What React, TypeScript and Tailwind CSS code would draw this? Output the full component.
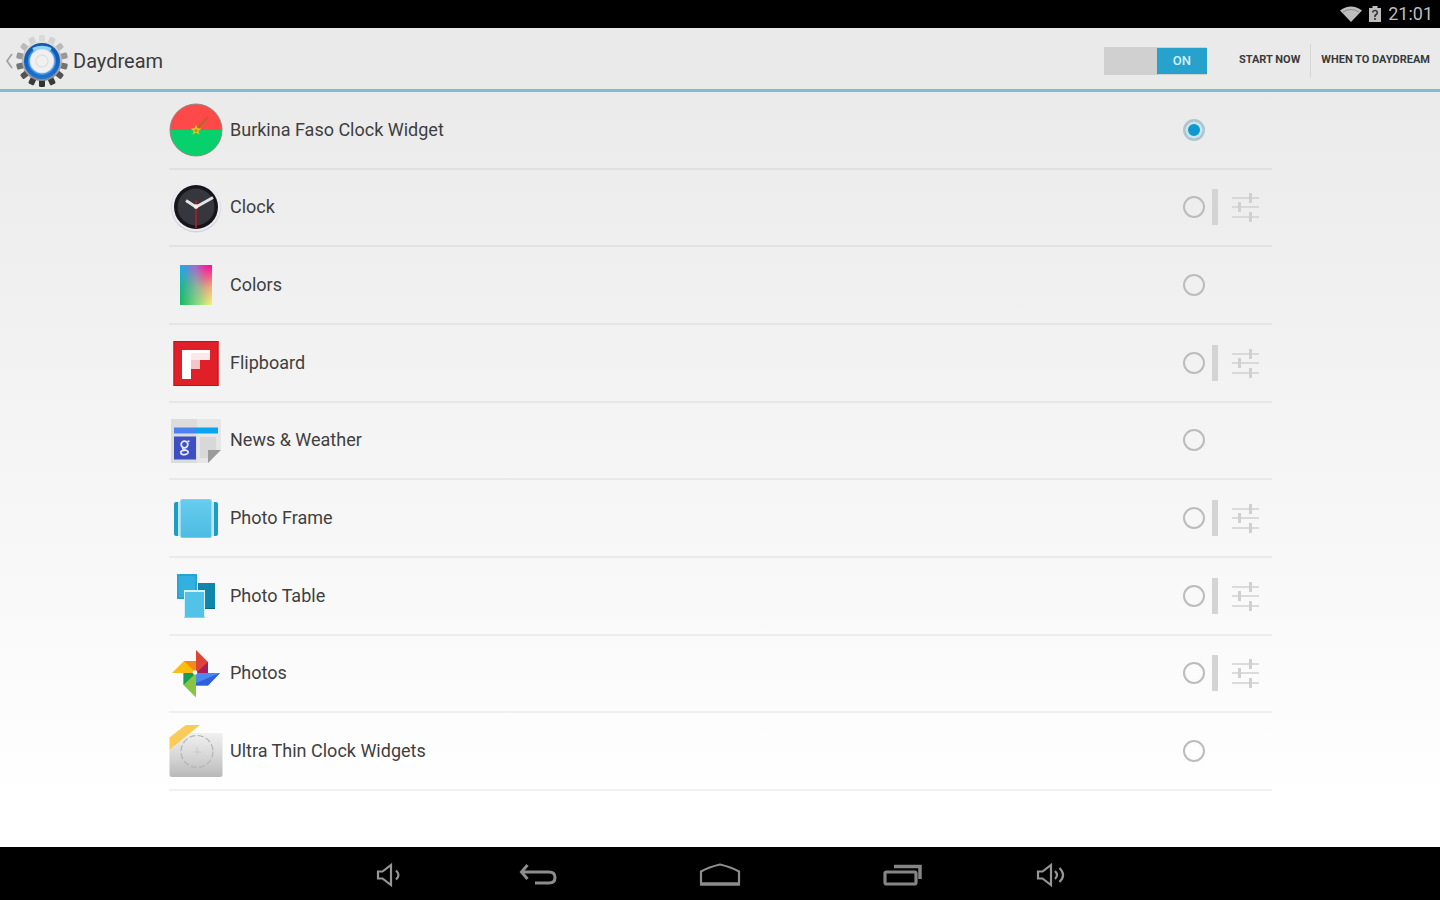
import React, { useState } from "react";

function BurkinaIcon() {
  return (
    <svg viewBox="0 0 54 54" className="size-[54px]" aria-hidden="true">
      <path d="M1 27a26 26 0 0 1 52 0z" fill="#ff4848" />
      <path d="M1 27a26 26 0 0 0 52 0z" fill="#06d16c" />
      <circle cx="27" cy="27" r="26" fill="none" stroke="#8f8a80" strokeWidth="1" />
      <path d="M27 27L39 14" stroke="#a8692c" strokeWidth="1.6" />
      <path d="M27 27L37 20" stroke="#b77430" strokeWidth="1" />
      <path d="M27 21.500l1.500 3.700 4 .2-3.100 2.500 1.100 3.900-3.500-2.200-3.500 2.200 1.100-3.900-3.100-2.500 4-.2z" fill="#e9c21e" />
      <circle cx="27" cy="27.500" r="1.500" fill="#c98a1c" />
      <path d="M27 5v2M27 47v2" stroke="#c0803a" strokeWidth="1" opacity=".5" />
    </svg>
  );
}

function ClockIcon() {
  return (
    <svg viewBox="0 0 54 54" className="size-[54px]" aria-hidden="true">
      <circle cx="27" cy="27.500" r="25" fill="#d3d3dc" />
      <circle cx="27" cy="26.500" r="24.500" fill="#ececf2" />
      <circle cx="27" cy="27" r="22" fill="#15151a" />
      <circle cx="27" cy="27" r="18.500" fill="#36363e" />
      <path d="M27 20v28" stroke="#a81f28" strokeWidth="1.800" />
      <path d="M17 20.500L27 27L44 17.500" fill="none" stroke="#e4e4e6" strokeWidth="3" />
      <circle cx="27" cy="26.500" r="2.300" fill="#f3eeee" />
    </svg>
  );
}

function ColorsIcon() {
  return (
    <svg viewBox="0 0 54 54" className="size-[54px]" aria-hidden="true">
      <defs>
        <linearGradient id="colorsTop">
          <stop offset="0" stopColor="#12b1f0" />
          <stop offset=".5" stopColor="#a46cc8" />
          <stop offset=".8" stopColor="#f8209c" />
          <stop offset="1" stopColor="#fb1590" />
        </linearGradient>
        <linearGradient id="colorsBottom">
          <stop offset="0" stopColor="#16b85a" />
          <stop offset=".5" stopColor="#7ddc80" />
          <stop offset="1" stopColor="#f7fa70" />
        </linearGradient>
        <linearGradient id="colorsFade" x2="0" y2="1">
          <stop offset=".05" stopColor="#000" />
          <stop offset=".55" stopColor="#aaa" />
          <stop offset="1" stopColor="#fff" />
        </linearGradient>
        <mask id="colorsMask">
          <rect x="11" y="7" width="32" height="41" fill="url(#colorsFade)" />
        </mask>
      </defs>
      <rect x="11" y="7" width="32" height="40" fill="url(#colorsTop)" />
      <rect x="11" y="7" width="32" height="40" fill="url(#colorsBottom)" mask="url(#colorsMask)" />
    </svg>
  );
}

function FlipboardIcon() {
  return (
    <svg viewBox="0 0 54 54" className="size-[54px]" aria-hidden="true">
      <rect x="4.500" y="5" width="45" height="45" fill="#e02028" />
      <rect x="5" y="5.500" width="44" height="44" fill="none" stroke="#cf0c12" />
      <path d="M13 14h28v10H31v9H22v10h-9z" fill="#fff" />
      <path d="M22 24h9v9h-9z" fill="#f7c4c8" />
      <path d="M22 17h19v7H22z" fill="#fbe9ea" />
    </svg>
  );
}

function NewsIcon() {
  return (
    <svg viewBox="0 0 54 54" className="size-[54px]" aria-hidden="true">
      <path d="M2 6h50v29L39 50H2z" fill="#dcdcdc" />
      <path d="M28 6h24v29L39 50H28z" fill="#e6e6e6" />
      <path d="M31 24h16v13h-8v8h-8z" fill="#d8d8d8" />
      <path d="M39 37h13L39 50z" fill="#9a9a9a" />
      <path d="M5 14.500h22v6H5z" fill="#4c82f0" />
      <path d="M27 14.500h22v6H27z" fill="#08a5f1" />
      <path d="M5 23.500h22v23H5z" fill="#3e4fc1" />
      <circle cx="15.500" cy="31.500" r="3.300" fill="none" stroke="#e8eaff" strokeWidth="1.800" />
      <path d="M18.500 28.500l2-.5M14 35c-1.500 2 4 1.500 5 3.500 1.200 3.500-7 4.500-7.300 1.200 0-1.800 2-2.400 4-2.300" fill="none" stroke="#e8eaff" strokeWidth="1.700" />
    </svg>
  );
}

function PhotoFrameIcon() {
  return (
    <svg viewBox="0 0 54 54" className="size-[54px]" aria-hidden="true">
      <defs>
        <linearGradient id="frameFill" x2="0" y2="1">
          <stop offset="0" stopColor="#66cdee" />
          <stop offset="1" stopColor="#4dbbe2" />
        </linearGradient>
      </defs>
      <rect x="5" y="11" width="44" height="34" rx="2" fill="#189fc3" />
      <path d="M10 11v34M44 11v34" stroke="#c3e4ed" strokeWidth="2" />
      <rect x="11" y="8" width="32" height="39" rx="2" fill="#98ddf3" />
      <rect x="12" y="8.500" width="30" height="38" rx="1.500" fill="url(#frameFill)" />
    </svg>
  );
}

function PhotoTableIcon() {
  return (
    <svg viewBox="0 0 54 54" className="size-[54px]" aria-hidden="true">
      <rect x="29" y="14" width="17" height="25" fill="#0f86aa" />
      <path d="M29 39.500h17" stroke="#0b6887" />
      <rect x="8" y="5" width="20" height="25" fill="#27a4d4" />
      <rect x="10" y="7" width="16" height="21" fill="#32b0df" />
      <rect x="15" y="22" width="21" height="27" fill="#b3c3c9" />
      <rect x="15" y="21" width="21" height="27" fill="#d6f1fa" />
      <rect x="16" y="23" width="19" height="25" fill="#52c2e8" />
    </svg>
  );
}

function PhotosIcon() {
  return (
    <svg viewBox="0 0 54 54" className="size-[54px]" aria-hidden="true">
      <path d="M27 4l12 12v11H27z" fill="#dc4437" />
      <path d="M39 16v11H27z" fill="#a91d5b" />
      <path d="M27 27h24L39 39.500H27z" fill="#4a88f2" />
      <path d="M51 27L39 39.500H27V37z" fill="#2f5fdb" />
      <path d="M27 27v24.500L14.500 39V27z" fill="#88c546" />
      <path d="M14.500 27H27L14.500 39z" fill="#149d55" />
      <path d="M27 27H3l12-12h12z" fill="#fbbe10" />
      <path d="M15 15h12v12z" fill="#f48b16" />
      <circle cx="26" cy="26.500" r="2.300" fill="#fff" />
    </svg>
  );
}

function UltraThinIcon() {
  return (
    <svg viewBox="0 0 54 54" className="size-[54px]" aria-hidden="true">
      <defs>
        <linearGradient id="thinFill" x2="0" y2="1">
          <stop offset="0" stopColor="#f0f0f0" />
          <stop offset=".5" stopColor="#d8d8d8" />
          <stop offset="1" stopColor="#b9b9b9" />
        </linearGradient>
      </defs>
      <path d="M22 9h30q1.500 0 1.500 1.500v40q0 2.500-2.500 2.500H3Q.5 53 .5 50.500V26z" fill="url(#thinFill)" />
      <path d="M18 1h13L.5 26V13.500L14 3q2-2 4-2z" fill="#fbcb58" />
      <circle cx="28" cy="27.500" r="16" fill="none" stroke="#b0b5b5" strokeWidth="1.200" strokeDasharray="6 2.400" />
      <path d="M28 23v9M24 28h8" stroke="#cacaca" strokeWidth="1" />
    </svg>
  );
}

function GearLogo() {
  const teeth = Array.from({ length: 14 }, (_, i) => (i * 360) / 14 + 360 / 28 + 360 / 28);
  const shade = (a: number) => {
    const t = (1 - Math.cos((a * Math.PI) / 180)) / 2;
    const v = Math.round(218 - 168 * t);
    return `rgb(${v},${v},${v})`;
  };
  return (
    <svg viewBox="0 0 54 54" className="size-[54px]" aria-hidden="true">
      <defs>
        <linearGradient id="gearBody" x2="0" y2="1">
          <stop offset="0" stopColor="#e2e2e2" />
          <stop offset="1" stopColor="#858585" />
        </linearGradient>
        <linearGradient id="gearRing" x2="0" y2="1">
          <stop offset="0" stopColor="#1659a8" />
          <stop offset=".5" stopColor="#0f5fc0" />
          <stop offset="1" stopColor="#1c74d2" />
        </linearGradient>
      </defs>
      {teeth.map((a) => (
        <rect key={a} x="24" y="1" width="6" height="8" rx="1.500" fill={shade(a)} transform={`rotate(${a} 27 27)`} />
      ))}
      <circle cx="27" cy="27" r="20" fill="url(#gearBody)" />
      <circle cx="27" cy="27" r="18" fill="url(#gearRing)" />
      <circle cx="27" cy="27" r="14" fill="#3f92e0" />
      <path d="M18 15.500q9-4 18 0" fill="none" stroke="#8fd2fa" strokeWidth="3.500" />
      <circle cx="27" cy="27" r="12.500" fill="#b9d8f2" />
      <circle cx="27" cy="27" r="11.500" fill="#f0f0f0" />
      <circle cx="27" cy="27" r="6" fill="none" stroke="#e0e0e0" strokeWidth="1.500" />
    </svg>
  );
}

function TuneIcon() {
  return (
    <svg viewBox="0 0 30 30" className="size-[30px]" fill="none" stroke="#d0d0d0" aria-hidden="true">
      <path d="M2 6h27M2 15h27M2 25h27" strokeWidth="2" opacity=".75" />
      <path d="M20.500 1v10M9.500 10v10M20.500 20v10" strokeWidth="3" />
    </svg>
  );
}

type Dream = { id: string; name: string; icon: React.ReactNode; settings: boolean };

const dreams: Dream[] = [
  { id: "burkina", name: "Burkina Faso Clock Widget", icon: <BurkinaIcon />, settings: false },
  { id: "clock", name: "Clock", icon: <ClockIcon />, settings: true },
  { id: "colors", name: "Colors", icon: <ColorsIcon />, settings: false },
  { id: "flipboard", name: "Flipboard", icon: <FlipboardIcon />, settings: true },
  { id: "news", name: "News & Weather", icon: <NewsIcon />, settings: false },
  { id: "frame", name: "Photo Frame", icon: <PhotoFrameIcon />, settings: true },
  { id: "table", name: "Photo Table", icon: <PhotoTableIcon />, settings: true },
  { id: "photos", name: "Photos", icon: <PhotosIcon />, settings: true },
  { id: "thin", name: "Ultra Thin Clock Widgets", icon: <UltraThinIcon />, settings: false },
];

function StatusBar() {
  return (
    <div className="flex h-7 shrink-0 items-center justify-end gap-[7px] bg-black pr-[7px] text-[#bdbdbd]">
      <svg viewBox="0 0 22 16" className="h-4 w-[22px]" aria-hidden="true">
        <path d="M0 4.500Q11-3.500 22 4.500L11 16z" fill="#bdbdbd" />
        <path d="M3 6Q11 1 19 6" fill="none" stroke="#8c8c8c" strokeWidth="1" />
      </svg>
      <svg viewBox="0 0 12 18" className="h-[18px] w-3" aria-hidden="true">
        <path d="M3.500 1h5v2H12v14H0V3h3.500z" fill="#bdbdbd" />
        <path d="M3.500 7.500Q4 5.500 6 5.500t2.300 2Q8.500 9 6 10.500V12M6 13v2" fill="none" stroke="#333" strokeWidth="1.600" />
      </svg>
      <span className="text-lg leading-7">21:01</span>
    </div>
  );
}

function Header() {
  const [on, setOn] = useState(true);
  return (
    <header className="flex h-16 shrink-0 items-center border-b-[3px] border-[#7fbcd4] bg-[#eaeaea] pt-1">
      <a href="#back" aria-label="Back" className="flex items-center pl-[5px]">
        <svg viewBox="0 0 10 18" className="h-[18px] w-[10px]" fill="none" stroke="#a3a3a3" strokeWidth="1.800" aria-hidden="true">
          <path d="M7 2L2 9l5 7" />
        </svg>
        <GearLogo />
      </a>
      <h1 className="ml-1 grow text-xl leading-7 text-[#3c3c3c]">Daydream</h1>
      <button
        type="button"
        role="switch"
        aria-checked={on}
        aria-label="Daydream"
        onClick={() => setOn(!on)}
        className={`flex h-7 w-[103px] items-center bg-[#d0d0d0] ${on ? "justify-end" : "justify-start"}`}
      >
        <span className="flex h-[26px] w-[50px] items-center justify-center bg-[#27a2cd] text-[13px] font-medium text-[#d8f1fa]">
          {on ? "ON" : "OFF"}
        </span>
      </button>
      <button type="button" className="ml-[22px] h-[34px] border-r border-[#d6d6d6] px-[10px] text-[11px] font-bold text-[#3a3a3a]">
        START NOW
      </button>
      <button type="button" className="h-[34px] px-[10px] text-[11px] font-bold text-[#3a3a3a]">
        WHEN TO DAYDREAM
      </button>
    </header>
  );
}

function NavBar() {
  const item = "flex items-center justify-center";
  return (
    <nav className="flex h-[53px] shrink-0 items-stretch justify-center bg-black pt-[3px]">
      <button type="button" aria-label="Volume down" className={`${item} w-[116px]`}>
        <svg viewBox="0 0 26 26" className="size-[26px]" fill="none" stroke="#969696" strokeWidth="2.200" aria-hidden="true">
          <path d="M2 9.500h4.500L15 3v20l-8.500-6.500H2z" />
          <path d="M20 8.500q5 4.500 0 9" />
        </svg>
      </button>
      <button type="button" aria-label="Back" className={`${item} w-[182px]`}>
        <svg viewBox="0 0 38 24" className="h-6 w-[38px]" fill="none" stroke="#8c8c8c" strokeWidth="3" aria-hidden="true">
          <path d="M3 9h27q6 0 6 5.500T30 20H16" />
          <path d="M8.500 2L2.500 9l6 7" />
        </svg>
      </button>
      <button type="button" aria-label="Home" className={`${item} w-[182px]`}>
        <svg viewBox="0 0 42 24" className="h-6 w-[42px]" fill="none" stroke="#8c8c8c" strokeWidth="2.200" aria-hidden="true">
          <path d="M2 21V8.500Q10 4 21 1.500 32 4 40 8.500V21" />
          <path d="M1 21h40" strokeWidth="3.500" />
        </svg>
      </button>
      <button type="button" aria-label="Recent apps" className={`${item} w-[182px]`}>
        <svg viewBox="0 0 40 24" className="h-6 w-10" fill="none" stroke="#858585" strokeWidth="3.200" aria-hidden="true">
          <rect x="3" y="9" width="31" height="12" rx="1.500" />
          <path d="M12 3.500h26V16" strokeWidth="3.500" />
        </svg>
      </button>
      <button type="button" aria-label="Volume up" className={`${item} w-[116px]`}>
        <svg viewBox="0 0 30 26" className="h-[26px] w-[30px]" fill="none" stroke="#969696" strokeWidth="2.200" aria-hidden="true">
          <path d="M2 9.500h4.500L15 3v20l-8.500-6.500H2z" />
          <path d="M19 9q4 4 0 8M23.500 6q7 7 0 14" />
        </svg>
      </button>
    </nav>
  );
}

export default function App() {
  const [selected, setSelected] = useState("burkina");
  return (
    <div className="flex min-h-screen flex-col bg-linear-to-b from-[#e8e8e8] to-[#ffffff] to-90% font-[Roboto,sans-serif]">
      <StatusBar />
      <Header />
      <main className="flex grow flex-col pr-[168px] pb-14 pl-[169px]">
        <ul className="grid grow auto-rows-fr">
          {dreams.map((d) => (
            <li key={d.id} className="flex items-center border-b-2 border-black/5">
              <label htmlFor={d.id} className="flex grow items-center gap-[7px] text-lg text-[#3f3f3f]">
                {d.icon}
                {d.name}
              </label>
              <input
                type="radio"
                name="dream"
                id={d.id}
                checked={selected === d.id}
                onChange={() => setSelected(d.id)}
                className="size-[22px] appearance-none rounded-full border-2 border-[#bcbcbc] checked:border-[#b3c6ce] checked:bg-[#0d9ad0] checked:shadow-[inset_0_0_0_3px_#cfe3eb]"
              />
              {d.settings ? (
                <div className="ml-[7px] flex w-[60px] items-center">
                  <span className="h-9 w-[6px] bg-[#d4d4d4]" />
                  <button type="button" aria-label={`${d.name} settings`} className="flex grow justify-center">
                    <TuneIcon />
                  </button>
                </div>
              ) : (
                <span className="ml-[7px] w-[60px]" />
              )}
            </li>
          ))}
        </ul>
      </main>
      <NavBar />
    </div>
  );
}
